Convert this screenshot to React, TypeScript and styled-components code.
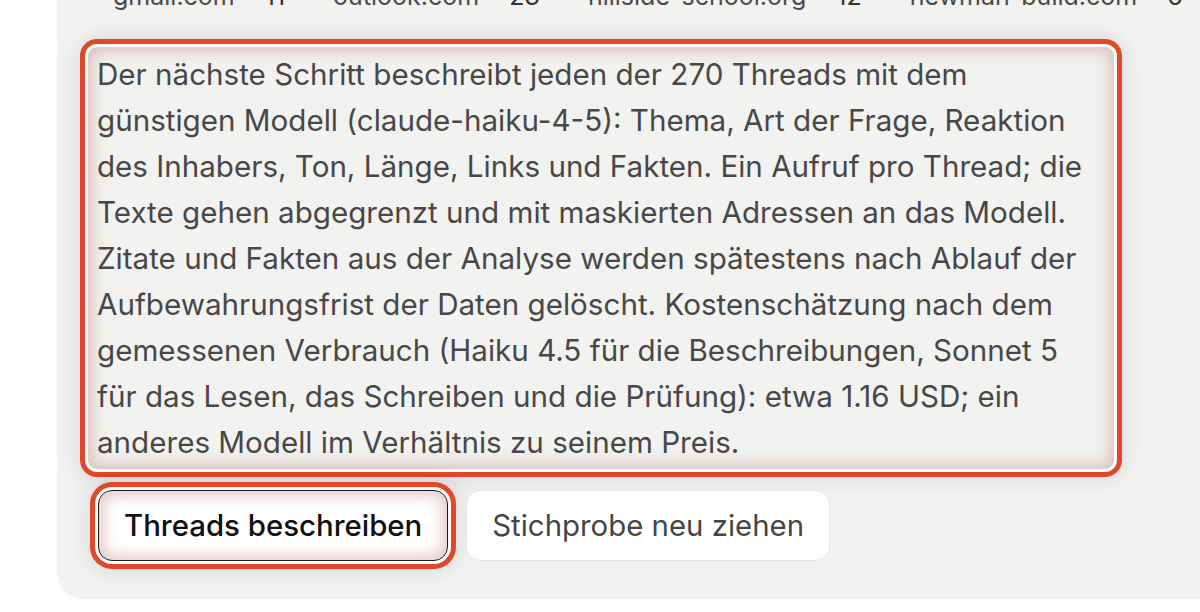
import React from 'react'
import styled, { createGlobalStyle, css } from 'styled-components'

const GlobalStyle = createGlobalStyle`
  html, body {
    margin: 0;
    padding: 0;
    background: #ffffff;
    overflow: hidden;
  }
  body {
    font-family: Inter, "Noto Sans", "Liberation Sans", sans-serif;
    -webkit-font-smoothing: antialiased;
  }
`

const highlight = css`
  box-shadow:
    0 0 0 3px #ffffff,
    0 0 0 8px #e1482b,
    0 0 22px 10px rgba(0, 0, 0, 0.1),
    inset 0 0 16px 3px rgba(185, 120, 110, 0.45);
`

const Panel = styled.div`
  margin-left: 57px;
  margin-top: -27px;
  background: #f2f2f0;
  border-bottom-left-radius: 26px;
  padding: 0 86px 38px 31px;
`

const Stats = styled.div`
  display: flex;
  gap: 48px;
  padding-left: 25px;
  margin-right: -86px;
  height: 46px;
  line-height: 46px;
  font-size: 25px;
  white-space: nowrap;
`

const Stat = styled.span`
  display: flex;
  gap: 30px;
  color: #4a4a4a;

  b {
    font-weight: 400;
    color: #333;
  }
`

const Notice = styled.div`
  margin-top: 28px;
  padding: 4px 9px;
  border-radius: 9px;
  background: #f2f2f0;
  color: #474747;
  font-size: 29.6px;
  line-height: 46px;
  ${highlight}
`

const Actions = styled.div`
  display: flex;
  gap: 18px;
  margin-top: 21px;
  padding-left: 10px;
`

const Button = styled.button<{ $primary?: boolean; $marked?: boolean }>`
  height: 71px;
  padding: 0 25px;
  border-radius: 14px;
  font-family: inherit;
  font-size: 29.4px;
  cursor: pointer;
  background: #ffffff;
  border: 1px solid ${p => (p.$primary ? '#1c1c1c' : '#e3e3e1')};
  color: ${p => (p.$primary ? '#111111' : '#454545')};
  font-weight: ${p => (p.$primary ? 500 : 400)};
  ${p => p.$marked && highlight}
`

const stats = [
  ['gmail.com', 11],
  ['outlook.com', 23],
  ['hillside-school.org', 12],
  ['newman-build.com', 6],
]

export default function App() {
  return (
    <>
      <GlobalStyle />
      <Panel>
        <Stats>
          {stats.map(([d, n]) => (
            <Stat key={d}>
              {d} <b>{n}</b>
            </Stat>
          ))}
        </Stats>
        <Notice>
          Der nächste Schritt beschreibt jeden der 270 Threads mit dem günstigen Modell
          (claude-haiku-4-5): Thema, Art der Frage, Reaktion des Inhabers, Ton, Länge, Links
          und Fakten. Ein Aufruf pro Thread; die Texte gehen abgegrenzt und mit maskierten
          Adressen an das Modell. Zitate und Fakten aus der Analyse werden spätestens nach
          Ablauf der Aufbewahrungsfrist der Daten gelöscht. Kostenschätzung nach dem gemessenen
          Verbrauch (Haiku 4.5 für die Beschreibungen, Sonnet 5 für das Lesen, das Schreiben und
          die Prüfung): etwa 1.16 USD; ein anderes Modell im Verhältnis zu seinem Preis.
        </Notice>
        <Actions>
          <Button $primary $marked>Threads beschreiben</Button>
          <Button>Stichprobe neu ziehen</Button>
        </Actions>
      </Panel>
    </>
  )
}
